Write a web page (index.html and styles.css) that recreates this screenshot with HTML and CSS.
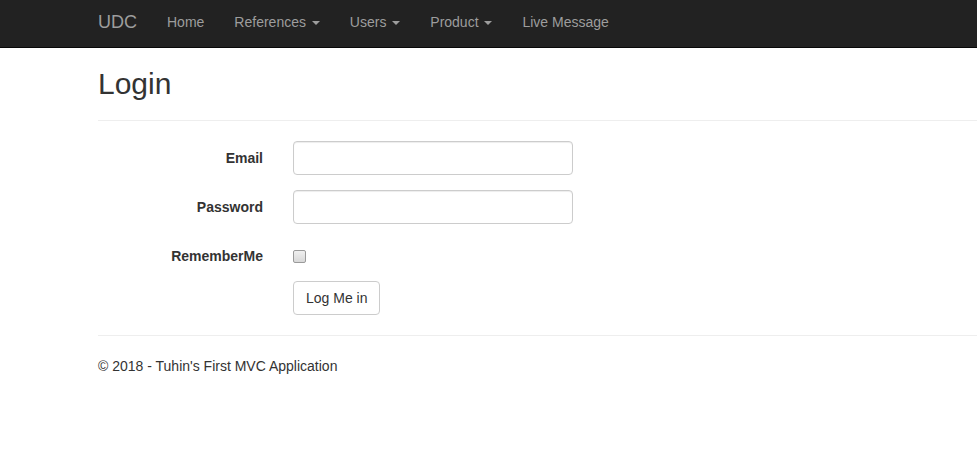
FILE: index.html
```html
<!DOCTYPE html>
<html lang="en">
<head>
<meta charset="utf-8">
<title>Login - UDC</title>
<link rel="stylesheet" href="styles.css">
</head>
<body>
<div class="page">
  <nav class="navbar">
    <div class="container nav-inner">
      <a class="brand" href="#">UDC</a>
      <ul class="nav">
        <li><a href="#">Home</a></li>
        <li><a href="#">References <span class="caret"></span></a></li>
        <li><a href="#">Users <span class="caret"></span></a></li>
        <li><a href="#">Product <span class="caret"></span></a></li>
        <li><a href="#">Live Message</a></li>
      </ul>
    </div>
  </nav>
  <main class="container body-content">
    <h2 class="title">Login</h2>
    <form class="form-horizontal">
      <hr class="rule">
      <div class="form-group">
        <label class="control-label" for="email">Email</label>
        <div class="control"><input class="form-control" id="email" type="email"></div>
      </div>
      <div class="form-group">
        <label class="control-label" for="password">Password</label>
        <div class="control"><input class="form-control" id="password" type="password"></div>
      </div>
      <div class="form-group">
        <label class="control-label" for="remember">RememberMe</label>
        <div class="control checkbox"><input class="check" id="remember" type="checkbox"></div>
      </div>
      <div class="form-group">
        <div class="label-spacer"></div>
        <div class="control"><button class="btn" type="button">Log Me in</button></div>
      </div>
    </form>
    <hr class="rule footer-rule">
    <footer class="footer">
      <p>&copy; 2018 - Tuhin's First MVC Application</p>
    </footer>
  </main>
</div>
</body>
</html>
```

FILE: styles.css
```css
* { box-sizing: border-box; }
html, body { margin: 0; padding: 0; }
body {
  font-family: "Liberation Sans", Arial, Helvetica, sans-serif;
  font-size: 14px;
  line-height: 20px;
  color: #333;
  background: #fff;
  overflow: hidden;
}
.page { margin-top: -3px; }
.container {
  margin-left: 83px;
  padding: 0 0 0 15px;
}
.navbar {
  background: #222;
  border-bottom: 1px solid #080808;
  height: 51px;
}
.nav-inner { display: flex; align-items: stretch; height: 50px; }
.brand {
  margin-left: -15px;
  padding: 15px;
  font-size: 18px;
  line-height: 20px;
  height: 50px;
  color: #9d9d9d;
  text-decoration: none;
}
.nav { display: flex; list-style: none; margin: 0; padding: 0; }
.nav a {
  display: block;
  padding: 15px;
  line-height: 20px;
  color: #9d9d9d;
  text-decoration: none;
}
.caret {
  display: inline-block;
  width: 0; height: 0;
  margin-left: 2px;
  vertical-align: middle;
  border-top: 4px solid #9d9d9d;
  border-left: 4px solid transparent;
  border-right: 4px solid transparent;
}
.body-content { margin-top: -1px; }
.title {
  font-size: 30px;
  font-weight: 500;
  line-height: 33px;
  margin: 20px 0 10px;
}
.rule {
  border: 0;
  border-top: 1px solid #eee;
  margin: 20px 0;
  height: 0;
}
.form-horizontal { margin-left: -15px; }
.form-horizontal .rule { margin: 20px 0 20px 15px; }
.form-group { display: flex; margin-bottom: 15px; }
.control-label, .label-spacer {
  width: 195px;
  flex: none;
  padding: 7px 15px 0;
  text-align: right;
  font-weight: bold;
  line-height: 20px;
}
.control { padding: 0 15px; flex: 1; }
.form-control {
  display: block;
  width: 100%;
  max-width: 280px;
  height: 34px;
  padding: 6px 12px;
  font: inherit;
  color: #555;
  background: #fff;
  border: 1px solid #ccc;
  border-radius: 4px;
  box-shadow: inset 0 1px 1px rgba(0,0,0,.075);
}
.checkbox { padding-top: 7px; min-height: 27px; }
.check {
  appearance: none;
  -webkit-appearance: none;
  display: block;
  width: 13px; height: 13px;
  margin: 4px 0 0;
  border: 1px solid #9a9a9a;
  border-radius: 2px;
  background: linear-gradient(#f0f0f0, #d8d8d8);
}
.btn {
  display: inline-block;
  padding: 6px 12px;
  font: inherit;
  line-height: 20px;
  color: #333;
  background: #fff;
  border: 1px solid #ccc;
  border-radius: 4px;
}
.footer p { margin: 0 0 10px; }
```
